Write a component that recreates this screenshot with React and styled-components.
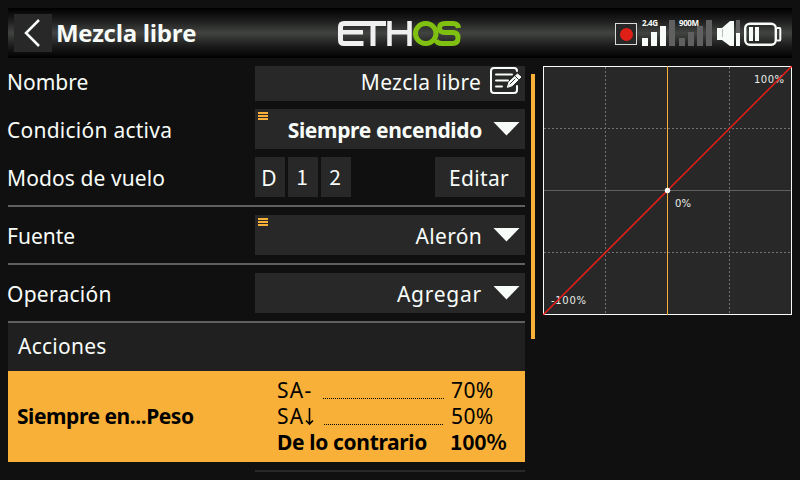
import React from "react";
import styled, { createGlobalStyle } from "styled-components";

const Global = createGlobalStyle`
  * { box-sizing: border-box; }
  body { margin: 0; background: #101010; overflow: hidden; }
`;

const Screen = styled.div`
  width: 800px;
  height: 480px;
  padding: 8px 8px 0;
  overflow: hidden;
  background: #101010;
  color: #f8fcf8;
  font-family: "Noto Sans", "Open Sans", sans-serif;
  font-size: 21px;
`;

const Header = styled.header`
  display: grid;
  grid-template-columns: 38px 284px 124px 1fr;
  height: 50px;
  padding: 6px 0 6px 6px;
  background: linear-gradient(#000 0%, #1c1d1c 25%, #424442 50%, #1c1d1c 75%, #000 100%);
`;

const BackButton = styled.button`
  width: 38px;
  height: 38px;
  padding: 0;
  border: 0;
  background: #282828;
`;

const Title = styled.h1`
  margin: 0;
  padding-left: 4px;
  font: 700 24px/38px "Open Sans", sans-serif;
  letter-spacing: -0.3px;
  white-space: nowrap;
`;

const Icon = styled.svg`
  display: block;
  flex: none;
`;

const Logo = styled(Icon)`
  margin-top: 6px;
`;

const Status = styled.div`
  padding-left: 155px;
`;

const Main = styled.main`
  display: flex;
  padding-top: 8px;
`;

const Form = styled.section`
  width: 517px;
`;

const Row = styled.div`
  display: grid;
  grid-template-columns: 247px 270px;
  grid-template-rows: ${(p) => p.$height || 40}px;
  margin-bottom: 8px;
`;

const Text = styled.span`
  display: block;
  line-height: ${(p) => p.$line || 42}px;
  letter-spacing: ${(p) => p.$track || 0}px;
  font-weight: ${(p) => (p.$bold ? 700 : 400)};
  white-space: pre;
`;

const Label = styled(Text)`
  margin-left: -1px;
`;

const Field = styled.div`
  position: relative;
  display: flex;
  justify-content: flex-end;
  gap: ${(p) => p.$gap || 11}px;
  padding-right: ${(p) => p.$end || 5}px;
  background: #282828;
`;

const Arrow = styled(Icon)`
  margin-top: 13px;
`;

const MenuMark = styled.i`
  position: absolute;
  left: 3px;
  top: 3px;
  width: 10px;
  height: 8px;
  background: repeating-linear-gradient(#f8b038 0 2px, transparent 2px 3px);
`;

const Modes = styled.div`
  display: flex;
  gap: 3px;
`;

const ModeButton = styled.button`
  width: ${(p) => p.$width || 30}px;
  height: 40px;
  margin-left: ${(p) => (p.$end ? "auto" : 0)};
  padding: ${(p) => (p.$digit ? "0 2px 2px 0" : "2px 2px 0 0")};
  border: 0;
  background: #282828;
  color: inherit;
  font: 21px/38px ${(p) => (p.$digit ? '"Noto Sans CJK SC"' : '"Noto Sans"')}, sans-serif;
  letter-spacing: ${(p) => p.$track || 0}px;
`;

const Rule = styled.hr`
  height: 2px;
  margin: 0 0 ${(p) => (p.$tight ? 0 : 8)}px;
  border: 0;
  background: #606060;
`;

const Section = styled.h2`
  height: 48px;
  margin: 0;
  padding-left: 10px;
  background: #202020;
  font-size: 21px;
`;

const Selected = styled.div`
  display: grid;
  grid-template-columns: 269px 174px 1fr;
  height: 91px;
  background: #f8b038;
  color: #000;
`;

const ActionName = styled(Text)`
  padding-left: 9px;
`;

const Conditions = styled.div`
  display: flex;
  flex-direction: column;
  padding-top: 6px;
`;

const Condition = styled.div`
  display: flex;
  height: 26px;
`;

const Leader = styled.i`
  width: ${(p) => p.$width}px;
  height: 1px;
  margin: 21px ${(p) => p.$end}px 0 auto;
  background: repeating-linear-gradient(90deg, #000 0 1px, transparent 1px 2px);
`;

const SwitchDown = styled(Icon)`
  margin-top: 5px;
`;

const Total = styled(Text)`
  margin-left: -1px;
  font-family: "Noto Sans CJK SC", sans-serif;
`;

const NextField = styled.div`
  height: 2px;
  margin: 8px 0 0 247px;
  background: #282828;
`;

const Scrollbar = styled.div`
  width: 4px;
  height: 265px;
  margin: 8px 8px 0 6px;
  background: #f8b038;
`;

const GraphText = styled.text`
  fill: #e8ece8;
  font: 10px "DejaVu Sans", sans-serif;
`;

const SignalText = styled.text`
  fill: #f8fcf8;
  font: 700 8px "Open Sans", sans-serif;
`;

function Down() {
  return (
    <Arrow width="27" height="14" viewBox="0 0 27 14">
      <path d="M0.500 0H26.500L13.500 13.500Z" fill="#f8fcf8" />
    </Arrow>
  );
}

function EthosLogo() {
  return (
    <Logo width="126" height="27" viewBox="0 0 126 27" fill="none" strokeWidth="5">
      <g stroke="#f0f0f0">
        <path d="M50 3.500H8Q4.500 3.500 4.500 7V20Q4.500 23.500 8 23.500H27.500M37 3V26" />
        <path d="M5 12.250H27M53.500 1V26M73.500 1V26M54 12.250H73" strokeWidth="4.500" />
      </g>
      <g stroke="#80c010">
        <rect x="79.500" y="3.500" width="20.500" height="20" rx="10" />
        <path d="M122.500 8Q122 3.500 117 3.500H109Q103.500 3.500 103.500 8Q103.500 12.500 109 12.500H117Q122 12.500 122 18Q122 23.500 116.500 23.500H106Q101 23.500 100 20" />
      </g>
    </Logo>
  );
}

function StatusIcons() {
  return (
    <Icon width="170" height="38" viewBox="615 14 170 38">
      <rect x="615.500" y="23.500" width="21" height="21" fill="#282828" stroke="#d8dcd8" />
      <circle cx="626.500" cy="34.500" r="6.500" fill="#e02018" />
      <path d="M642 38h6v8h-6zM651 32h6v14h-6zM660 26h6v20h-6z" fill="#f8fcf8" />
      <path d="M669 20h6v26h-6zM679 38h6v8h-6zM688 32h6v14h-6zM697 26h6v20h-6zM706 20h6v26h-6z" fill="#606060" />
      <SignalText x="642" y="26.300" textLength="16">2.4G</SignalText>
      <SignalText x="679" y="26.300" textLength="20">900M</SignalText>
      <path d="M717 28h5l8-7h4v25h-4l-8-6h-5z" fill="#f8fcf8" />
      <path d="M722.500 29v8" stroke="#bbb" />
      <path d="M736 20h4v13h-4z" fill="#606060" />
      <path d="M736 33h4v13h-4z" fill="#f8fcf8" />
      <rect x="745.200" y="23.700" width="30.600" height="21.100" rx="4.500" fill="none" stroke="#f8fcf8" strokeWidth="2.400" />
      <path d="M777 28h2.500q.8 0 .8 1v10.500q0 1-.8 1H777" fill="none" stroke="#f8fcf8" strokeWidth="2" />
      <path d="M749 27h4v14h-4zM755 27h4v14h-4z" fill="#f8fcf8" />
    </Icon>
  );
}

function Graph() {
  return (
    <Icon width="249" height="249" viewBox="0 0 249 249">
      <rect x="0.500" y="0.500" width="248" height="248" fill="#282828" stroke="#f8fcf8" />
      <path d="M62.500 1V248M186.500 1V248M1 62.500H248M1 186.500H248" stroke="#707070" strokeDasharray="2 2" />
      <path d="M1 124.500H248" stroke="#606060" />
      <GraphText x="211" y="17" textLength="30">100%</GraphText>
      <GraphText x="132" y="141" textLength="16">0%</GraphText>
      <GraphText x="8" y="238" textLength="35">-100%</GraphText>
      <path d="M124.500 0V249" stroke="#f8b038" />
      <path d="M0 249L249 0" stroke="#f01c18" strokeWidth="1.500" />
      <circle cx="124.500" cy="124.500" r="2.700" fill="#fff" />
    </Icon>
  );
}

export default function App() {
  return (
    <Screen>
      <Global />
      <Header>
        <BackButton aria-label="Atrás">
          <Icon width="38" height="38" viewBox="0 0 38 38">
            <path d="M25 6L12 19L25 32" fill="none" stroke="#f8fcf8" strokeWidth="2.500" />
          </Icon>
        </BackButton>
        <Title>Mezcla libre</Title>
        <EthosLogo />
        <Status><StatusIcons /></Status>
      </Header>
      <Main>
        <Form>
          <Row $height={35}>
            <Label $line={33}>Nombre</Label>
            <Field $end={2} $gap={8}>
              <Text $line={33} $track={0.25}>Mezcla libre</Text>
              <Icon width="34" height="30" viewBox="0 0 34 30" fill="none" stroke="#f8fcf8" strokeWidth="2" strokeLinecap="round">
                <path d="M28 5Q28 2 25 2H5Q2 2 2 5V24Q2 27 5 27H25Q28 27 28 24V20M7 8.500H23M7 14.500H19M7 20.500H13" />
                <path d="M18.500 21L20 16L28.500 8L32 11L23.500 19.500Z" fill="#f8fcf8" strokeWidth="1" />
                <path d="M26.500 10.500L29.500 13.500M21 18L26 13" stroke="#282828" strokeWidth="1" />
              </Icon>
            </Field>
          </Row>
          <Row>
            <Label $track={0.25}>Condición activa</Label>
            <Field><MenuMark /><Text $bold $track={-0.35}>Siempre encendido</Text><Down /></Field>
          </Row>
          <Row>
            <Label $track={0.1}>Modos de vuelo</Label>
            <Modes>
              <ModeButton>D</ModeButton>
              <ModeButton $digit>1</ModeButton>
              <ModeButton $digit>2</ModeButton>
              <ModeButton $width={90} $end $track={0.35}>Editar</ModeButton>
            </Modes>
          </Row>
          <Rule />
          <Row>
            <Label>Fuente</Label>
            <Field><MenuMark /><Text $track={0.3}>Alerón</Text><Down /></Field>
          </Row>
          <Rule />
          <Row>
            <Label $track={0.25}>Operación</Label>
            <Field><Text $track={0.75}>Agregar</Text><Down /></Field>
          </Row>
          <Rule $tight />
          <Section><Text $line={46} $track={0.25}>Acciones</Text></Section>
          <Selected>
            <ActionName $bold $line={91} $track={-0.45}>Siempre en...Peso</ActionName>
            <Conditions>
              <Condition><Text $line={26} $track={1.3}>SA-</Text><Leader $width={121} $end={7} /></Condition>
              <Condition>
                <Text $line={26} $track={1.3}>SA</Text>
                <SwitchDown width="9" height="18" viewBox="0 0 9 18" role="img" aria-label="↓">
                  <path d="M4.500 0V15.500M1 12.500L4.500 16L8 12.500" fill="none" stroke="#000" strokeWidth="1.600" />
                </SwitchDown>
                <Leader $width={119} $end={8} />
              </Condition>
              <Condition><Text $bold $line={26} $track={-0.35}>De lo contrario</Text></Condition>
            </Conditions>
            <Conditions>
              <Text $line={26} $track={0.4}>70%</Text>
              <Text $line={26} $track={0.4}>50%</Text>
              <Total $bold $line={24} $track={-0.25}>100%</Total>
            </Conditions>
          </Selected>
          <NextField />
        </Form>
        <Scrollbar />
        <Graph />
      </Main>
    </Screen>
  );
}
